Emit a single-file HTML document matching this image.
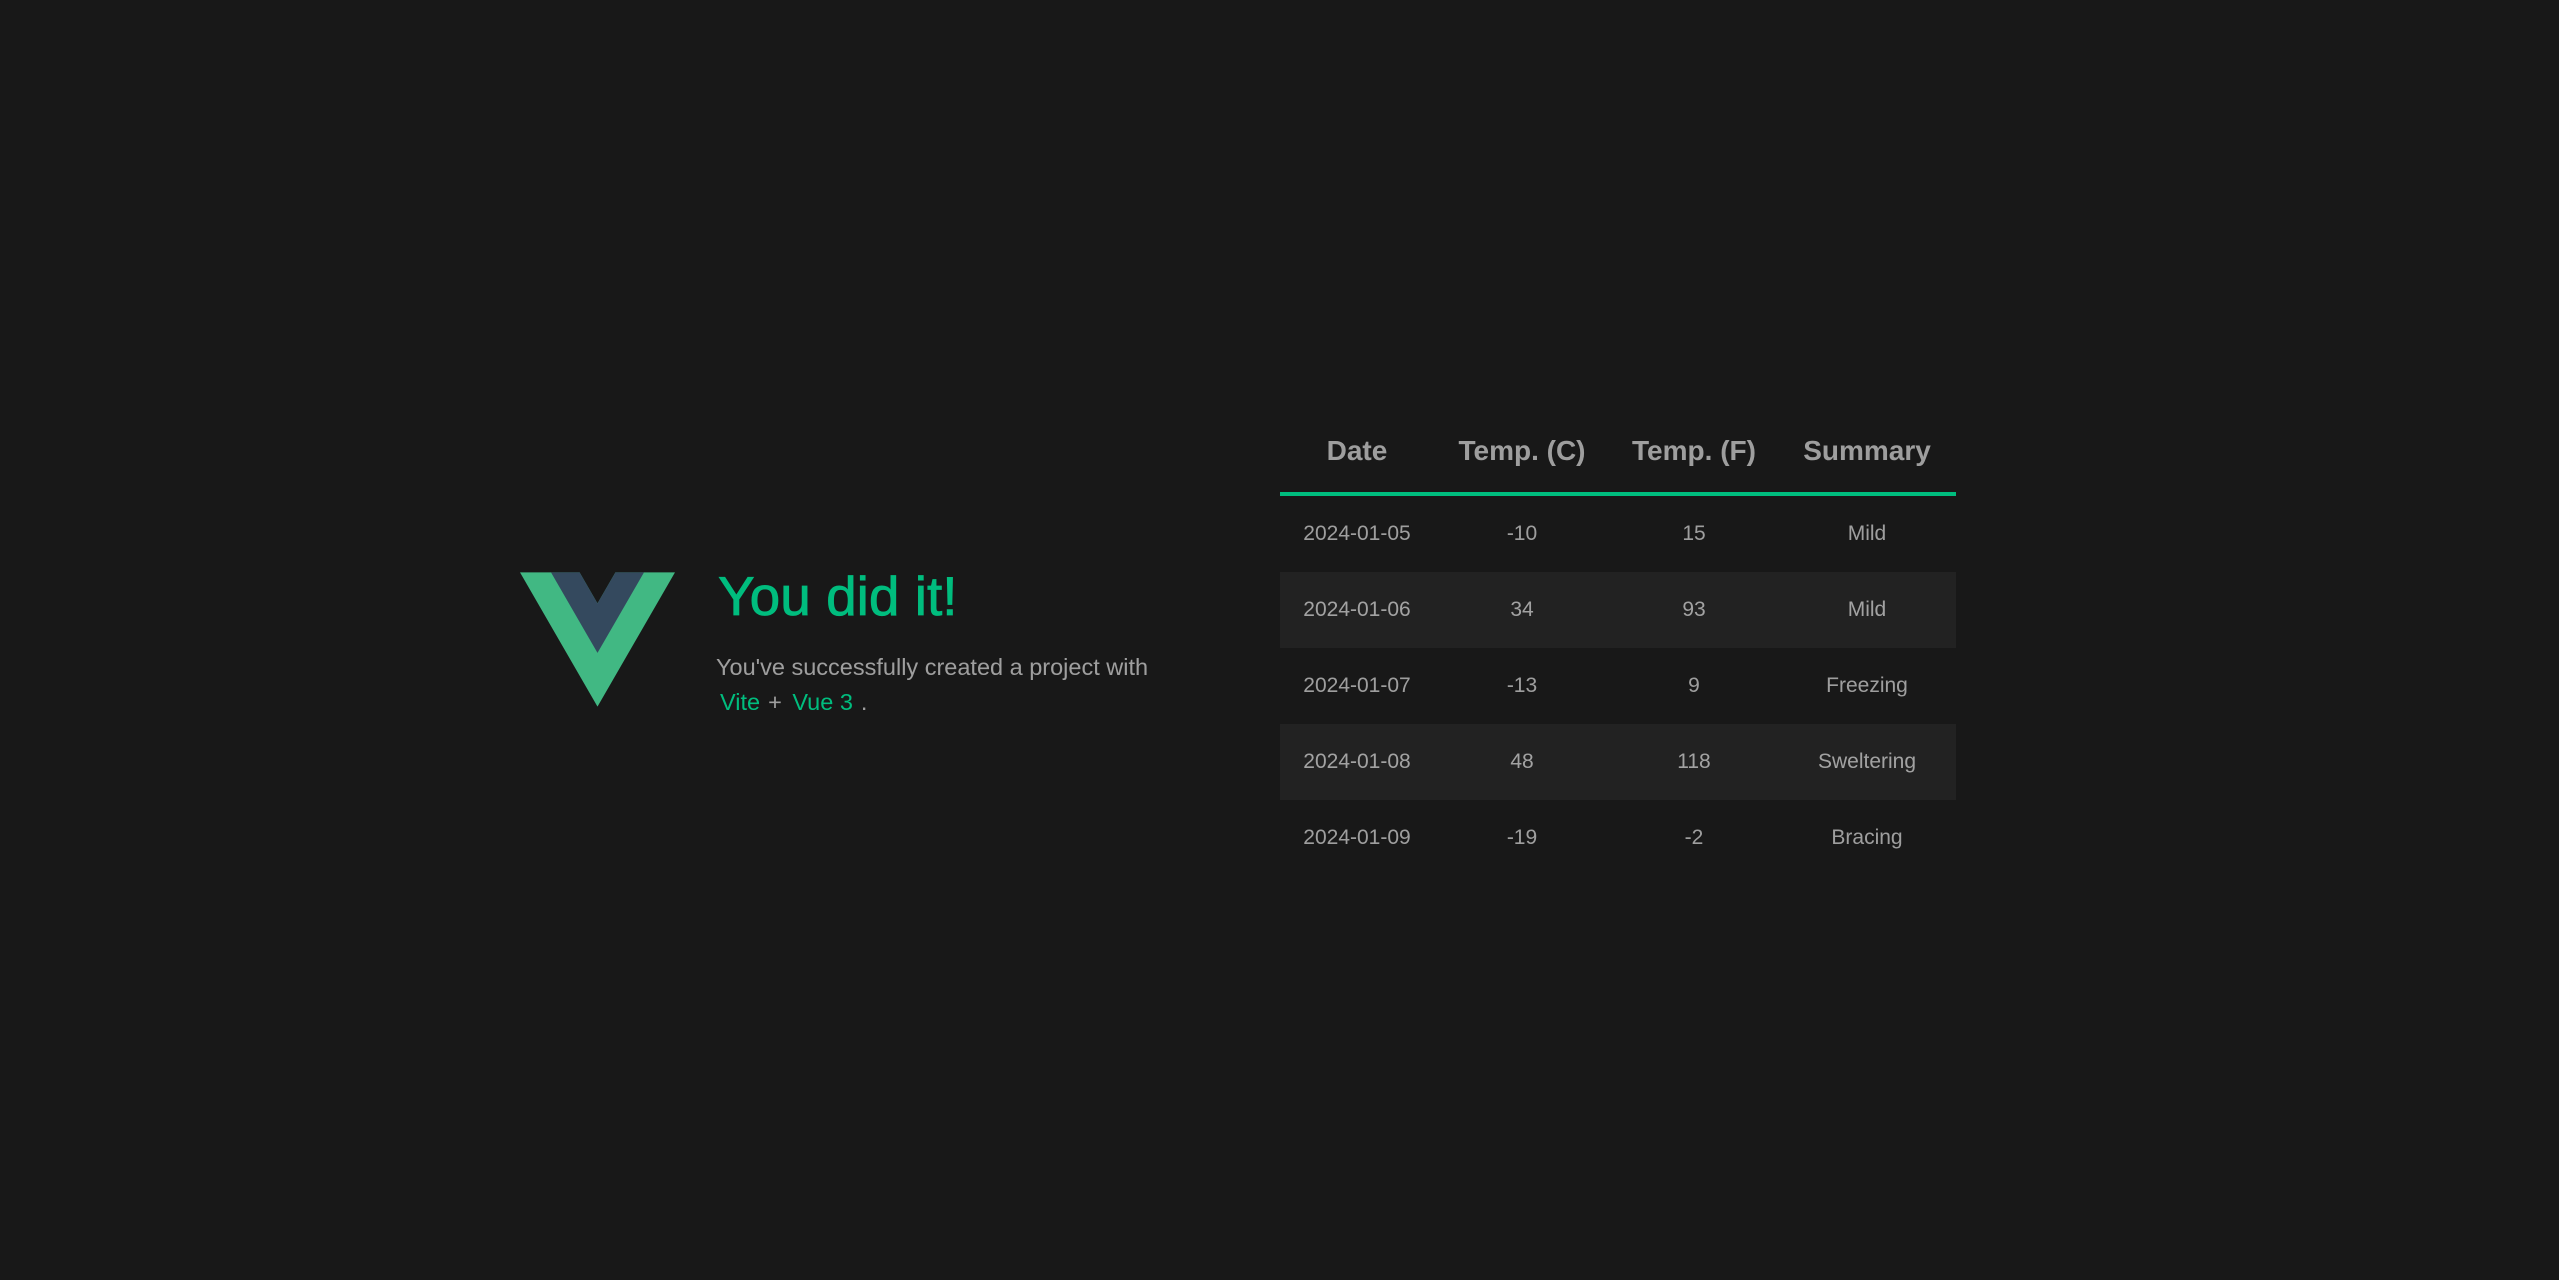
<!DOCTYPE html>
<html><head><meta charset="utf-8"><style>
html,body{margin:0;padding:0;background:#181818;width:2559px;height:1280px;overflow:hidden;font-family:"Liberation Sans",sans-serif;color:rgba(235,235,235,0.64)}
.abs{position:absolute}
h1{position:absolute;left:718px;top:561px;margin:0;font-size:55px;font-weight:400;color:#00bd7e;line-height:70px;white-space:nowrap;-webkit-text-stroke:0.8px #00bd7e}
.sub{position:absolute;left:716px;top:650px;font-size:23.5px;line-height:35px;width:480px}
.sub a{color:#00bd7e;text-decoration:none;padding:0 8px 0 4px}
table{position:absolute;left:1280px;top:410px;border-collapse:collapse;width:676px;table-layout:fixed}
th{font-size:28px;font-weight:700;height:82px;padding:0;text-align:center;border-bottom:4px solid #00bd7e;color:rgba(235,235,235,0.64)}
td{font-size:21px;height:76px;padding:0;text-align:center}
tr.s td{background:#222}
</style></head><body>
<svg class="abs" style="left:520px;top:572px" width="155" height="135" viewBox="0 0 261.76 226.69">
<path d="M161.096.001l-30.225 52.351L100.647.001H-.005l130.877 226.688L261.749.001z" fill="#41b883"/>
<path d="M161.096.001l-30.225 52.351L100.647.001H52.346l78.526 136.01L209.398.001z" fill="#34495e"/>
</svg>
<h1>You did it!</h1>
<div class="sub">You've successfully created a project with <a>Vite</a>+ <a>Vue 3</a>.</div>
<table>
<colgroup><col style="width:154px"><col style="width:176px"><col style="width:168px"><col style="width:178px"></colgroup>
<tr><th>Date</th><th>Temp. (C)</th><th>Temp. (F)</th><th>Summary</th></tr>
<tr><td>2024-01-05</td><td>-10</td><td>15</td><td>Mild</td></tr>
<tr class="s"><td>2024-01-06</td><td>34</td><td>93</td><td>Mild</td></tr>
<tr><td>2024-01-07</td><td>-13</td><td>9</td><td>Freezing</td></tr>
<tr class="s"><td>2024-01-08</td><td>48</td><td>118</td><td>Sweltering</td></tr>
<tr><td>2024-01-09</td><td>-19</td><td>-2</td><td>Bracing</td></tr>
</table>
</body></html>
